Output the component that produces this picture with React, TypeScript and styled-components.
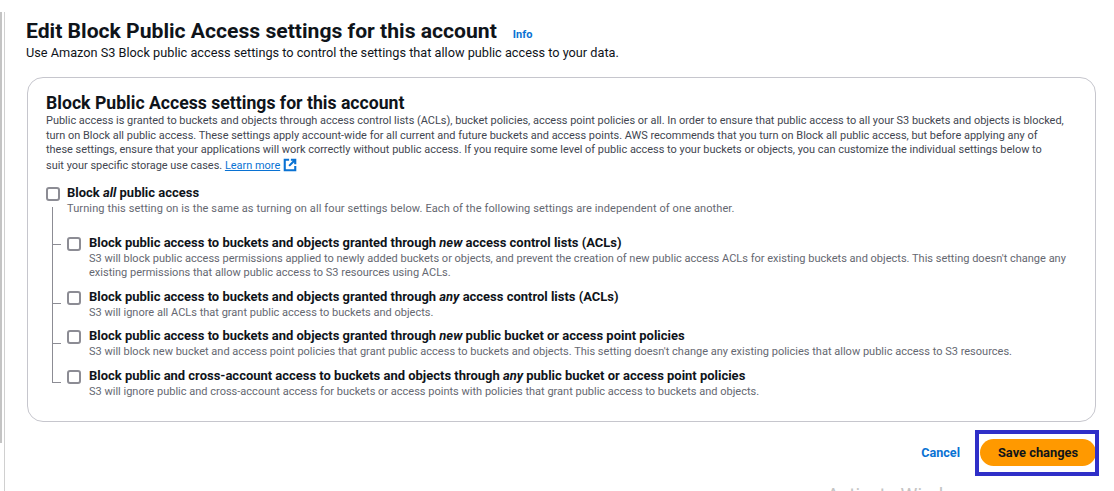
import React from "react";
import styled, { createGlobalStyle } from "styled-components";

const Global = createGlobalStyle`
  html, body { margin: 0; padding: 0; background: #fff; }
  body { width: 1114px; height: 491px; overflow: hidden; font-family: Roboto, "Open Sans", "Liberation Sans", sans-serif; color: #0f141a; }
`;

const Page = styled.div`
  position: relative;
  width: 1114px;
  height: 491px;
  overflow: hidden;
  box-sizing: border-box;
  padding: 18px 18px 0 26px;
`;
const EdgeBar = styled.div`
  position: absolute; left: 0; top: 12px; width: 2px; height: 431px; background: #c4c4c4;
`;
const EdgeLine = styled.div`
  position: absolute; left: 4px; top: 12px; width: 1px; height: 479px; background: #d0d0d0;
`;
const HeaderRow = styled.div`
  display: flex; align-items: baseline; gap: 16px; height: 26px;
`;
const Title = styled.h1`
  margin: 0; font-size: 21.13px; line-height: 26px; font-weight: 700; white-space: nowrap;
`;
const Info = styled.a`
  font-size: 11px; font-weight: 700; color: #0972d3;
`;
const Sub = styled.p`
  margin: 0; font-size: 12.72px; line-height: 18px; color: #0f141a; white-space: nowrap;
`;
const Card = styled.section`
  box-sizing: border-box;
  margin: 15px 0 0 1px;
  width: 1069px;
  height: 345px;
  border: 1px solid #c6c6cd;
  border-radius: 16px;
  padding: 14px 18px 0;
`;
const CardTitle = styled.h2`
  margin: 0; font-size: 17.65px; line-height: 22px; font-weight: 700; white-space: nowrap;
`;
const Body = styled.p`
  margin: 0; font-size: 10.95px; line-height: 14.5px; color: #424650; white-space: nowrap;
`;
const Learn = styled.a`
  color: #0972d3; text-decoration: underline;
`;
const Ext = styled.svg`
  width: 14px; height: 14px; vertical-align: -3px; margin-left: 3px;
`;
const Master = styled.div`
  display: flex; gap: 7px; margin-top: 12px; position: relative;
`;
const Box = styled.span`
  flex: none; box-sizing: border-box; width: 14px; height: 14px; margin-top: 2px;
  border: 2px solid #8c8c94; border-radius: 3px; background: #fff;
`;
const Label = styled.div`
  font-size: 12.98px; line-height: 16px; font-weight: 700; color: #0f141a; white-space: nowrap;
  em { font-style: italic; }
`;
const Desc = styled.div<{ $wide?: boolean }>`
  font-size: 11.03px; line-height: 14px; color: #656871; white-space: nowrap; font-weight: 400;
  letter-spacing: ${(p) => (p.$wide ? "0.1px" : "0")};
  ${Label} + & { margin-top: 1px; }
`;
const Tree = styled.div`
  position: relative; margin-left: 21px; margin-top: 19px;
  display: flex; flex-direction: column;
  &::before {
    content: ""; position: absolute; left: -15px; top: -28px; height: 176px; width: 1px; background: #8c8c94;
  }
`;
const Child = styled.div<{ $gap: number; $tick: number }>`
  position: relative; display: flex; gap: 8px; margin-top: ${(p) => p.$gap}px;
  &::before {
    content: ""; position: absolute; left: -15px; top: ${(p) => p.$tick}px; width: 9px; height: 1px; background: #8c8c94;
  }
`;
const Footer = styled.div`
  display: flex; align-items: center; justify-content: flex-end; gap: 20px; margin-top: 17px; width: 1070px;
`;
const Cancel = styled.a`
  font-size: 12.6px; font-weight: 700; color: #0972d3;
`;
const Save = styled.button`
  border: 0; width: 116px; height: 27px; border-radius: 14px; background: #ff9900; color: #0f141a;
  font: 700 12.85px Roboto, "Open Sans", sans-serif; padding: 0;
`;
const Highlight = styled.div`
  position: absolute; left: 975px; top: 430px; width: 124px; height: 46px; box-sizing: border-box; border: 4px solid #2f2fc8;
`;
const Watermark = styled.div`
  position: absolute; left: 827px; top: 486px; font-size: 19px; line-height: 18px; color: #c4c4c4; white-space: nowrap;
`;

const rows = [
  { gap: 0, tick: 9, label: <>Block public access to buckets and objects granted through <em>new</em> access control lists (ACLs)</>, desc: ["S3 will block public access permissions applied to newly added buckets or objects, and prevent the creation of new public access ACLs for existing buckets and objects. This setting doesn't change any", "existing permissions that allow public access to S3 resources using ACLs."] },
  { gap: 9, tick: 14, label: <>Block public access to buckets and objects granted through <em>any</em> access control lists (ACLs)</>, desc: ["S3 will ignore all ACLs that grant public access to buckets and objects."] },
  { gap: 8, tick: 15, label: <>Block public access to buckets and objects granted through <em>new</em> public bucket or access point policies</>, desc: ["S3 will block new bucket and access point policies that grant public access to buckets and objects. This setting doesn't change any existing policies that allow public access to S3 resources."] },
  { gap: 9, tick: 14, label: <>Block public and cross-account access to buckets and objects through <em>any</em> public bucket or access point policies</>, desc: ["S3 will ignore public and cross-account access for buckets or access points with policies that grant public access to buckets and objects."] },
];

export default function App() {
  return (
    <Page>
      <Global />
      <EdgeBar />
      <EdgeLine />
      <HeaderRow>
        <Title>Edit Block Public Access settings for this account</Title>
        <Info>Info</Info>
      </HeaderRow>
      <Sub>Use Amazon S3 Block public access settings to control the settings that allow public access to your data.</Sub>
      <Card>
        <CardTitle>Block Public Access settings for this account</CardTitle>
        <Body>Public access is granted to buckets and objects through access control lists (ACLs), bucket policies, access point policies or all. In order to ensure that public access to all your S3 buckets and objects is blocked,</Body>
        <Body>turn on Block all public access. These settings apply account-wide for all current and future buckets and access points. AWS recommends that you turn on Block all public access, but before applying any of</Body>
        <Body>these settings, ensure that your applications will work correctly without public access. If you require some level of public access to your buckets or objects, you can customize the individual settings below to</Body>
        <Body>
          suit your specific storage use cases. <Learn>Learn more</Learn>
          <Ext viewBox="0 0 16 16" fill="none" stroke="#0972d3" strokeWidth="2.4">
            <path d="M7 2H2v12h12V9" />
            <path d="M9 2h5v5M14 2L7 9" />
          </Ext>
        </Body>
        <Master>
          <Box />
          <div>
            <Label>Block <em>all</em> public access</Label>
            <Desc $wide>Turning this setting on is the same as turning on all four settings below. Each of the following settings are independent of one another.</Desc>
          </div>
        </Master>
        <Tree>
          {rows.map((r, i) => (
            <Child key={i} $gap={r.gap} $tick={r.tick}>
              <Box />
              <div>
                <Label>{r.label}</Label>
                {r.desc.map((d) => <Desc key={d}>{d}</Desc>)}
              </div>
            </Child>
          ))}
        </Tree>
      </Card>
      <Footer>
        <Cancel>Cancel</Cancel>
        <Save>Save changes</Save>
      </Footer>
      <Highlight />
      <Watermark>Activate Windows</Watermark>
    </Page>
  );
}
